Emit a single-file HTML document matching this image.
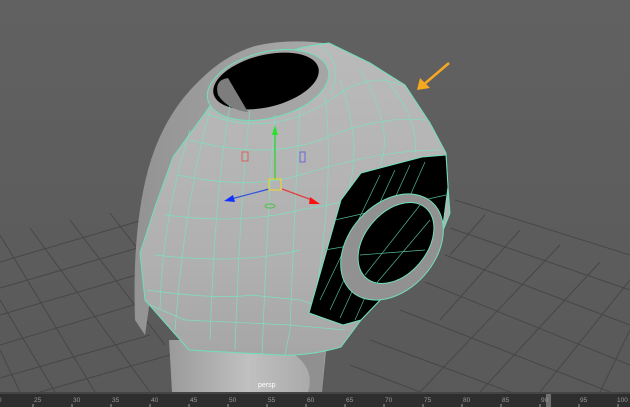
<!DOCTYPE html>
<html><head><style>
html,body{margin:0;padding:0;background:#5d5d5d;}
svg{display:block}
</style></head><body>
<svg width="630" height="407" viewBox="0 0 630 407" xmlns="http://www.w3.org/2000/svg" font-family="Liberation Sans, sans-serif">
<defs>
<linearGradient id="bg" x1="0" y1="0" x2="0" y2="1">
<stop offset="0" stop-color="#616161"/><stop offset="1" stop-color="#595959"/>
</linearGradient>
<linearGradient id="neck" x1="0" y1="0" x2="1" y2="0">
<stop offset="0" stop-color="#9a9a9a"/><stop offset="0.5" stop-color="#c0c0c0"/><stop offset="1" stop-color="#a4a4a4"/>
</linearGradient>
<linearGradient id="shell" x1="0" y1="0" x2="1" y2="0">
<stop offset="0" stop-color="#939393"/><stop offset="1" stop-color="#aaaaaa"/>
</linearGradient>
<linearGradient id="mesh" x1="0" y1="0" x2="0" y2="1">
<stop offset="0" stop-color="#bababa"/><stop offset="0.7" stop-color="#b0b0b0"/><stop offset="1" stop-color="#a6a6a6"/>
</linearGradient>
</defs>
<rect width="630" height="407" fill="url(#bg)"/>
<!-- floor grid -->
<g stroke="#474747" stroke-width="1" fill="none">
<line x1="0" y1="262" x2="170" y2="212"/>
<line x1="0" y1="288" x2="165" y2="240"/>
<line x1="0" y1="315" x2="160" y2="268"/>
<line x1="0" y1="345" x2="150" y2="300"/>
<line x1="0" y1="378" x2="150" y2="335"/>
<line x1="40" y1="392" x2="170" y2="355"/>
<line x1="0" y1="235" x2="95" y2="392"/>
<line x1="30" y1="228" x2="150" y2="392"/>
<line x1="70" y1="220" x2="165" y2="345"/>
<line x1="110" y1="213" x2="150" y2="265"/>
<line x1="0" y1="300" x2="55" y2="392"/>
<line x1="0" y1="350" x2="20" y2="392"/>
<line x1="455" y1="200" x2="630" y2="255"/>
<line x1="450" y1="228" x2="630" y2="290"/>
<line x1="445" y1="255" x2="630" y2="325"/>
<line x1="425" y1="282" x2="630" y2="365"/>
<line x1="400" y1="310" x2="610" y2="392"/>
<line x1="370" y1="340" x2="510" y2="392"/>
<line x1="350" y1="365" x2="420" y2="392"/>
<line x1="630" y1="280" x2="540" y2="392"/>
<line x1="600" y1="262" x2="480" y2="392"/>
<line x1="560" y1="245" x2="420" y2="392"/>
<line x1="520" y1="230" x2="440" y2="320"/>
<line x1="485" y1="215" x2="450" y2="255"/>
<line x1="630" y1="330" x2="600" y2="392"/>
</g>
<!-- neck -->
<path d="M169 340 L327 340 L322 392 L172 392 Z" fill="url(#neck)"/>
<path d="M295 355 Q315 370 308 392 L322 392 L325 350 Z" fill="#909090"/>
<!-- back shell -->
<path d="M255 46 Q290 38 330 44 L320 70 L205 115 L175 160 L160 215 L150 300 L145 335 L135 320 Q132 230 148 170 Q163 115 200 80 Q225 55 255 46 Z" fill="url(#shell)"/>
<!-- main selected mesh -->
<path d="M205 113 Q230 75 270 58 Q300 46 329 43 L370 63 L405 85 L430 123 L446 153 L448 187 L450 213 L442 233 L402 277 L361 320 L341 347 Q310 356 281 355 L189 350 L145 300 L140 253 L155 207 L173 157 Z" fill="url(#mesh)" stroke="#6fe0b8" stroke-width="1"/>
<!-- top hole -->
<ellipse cx="268" cy="85" rx="62" ry="33" transform="rotate(-14 268 85)" fill="#a5a5a5" stroke="#6fe0b8" stroke-width="1"/>
<ellipse cx="266" cy="81" rx="54" ry="26" transform="rotate(-14 266 81)" fill="#000"/>
<path d="M218 95 Q214 80 228 78 Q238 95 248 112 Q228 110 218 95 Z" fill="#7d7d7d"/>
<!-- wireframe lines -->
<g stroke="#7ae4bf" stroke-width="0.7" fill="none" opacity="0.9">
<path d="M205 113 Q270 140 330 100 Q370 70 400 85"/>
<path d="M190 140 Q265 160 320 140 Q380 115 425 120"/>
<path d="M178 175 Q250 190 300 175 Q380 150 440 150"/>
<path d="M165 215 Q240 225 300 210 Q330 205 350 200"/>
<path d="M155 255 Q240 265 300 250"/>
<path d="M147 290 Q220 300 250 295 L300 300 L330 310"/>
<path d="M150 305 L185 320 L290 325 L345 330"/>
<path d="M230 105 Q215 190 210 340"/>
<path d="M250 110 Q240 200 235 350"/>
<path d="M275 115 Q268 200 262 355"/>
<path d="M300 108 Q295 200 290 330 L285 355"/>
<path d="M325 95 Q335 180 315 300"/>
<path d="M340 80 Q365 150 345 200"/>
<path d="M360 70 Q395 130 380 165"/>
<path d="M385 78 Q420 120 415 155"/>
<path d="M210 110 Q185 200 175 330"/>
<path d="M190 130 Q162 220 160 310"/>
<path d="M320 45 Q345 65 330 95"/>
</g>
<!-- side cavity -->
<path d="M309 313 L341 200 L361 173 L422 157 L446 155 L448 187 L442 233 L402 277 L361 320 L343 325 Z" fill="#000" stroke="#6fe0b8" stroke-width="1"/>
<g stroke="#4fb893" stroke-width="0.7" fill="none">
<path d="M320 300 L380 175"/><path d="M330 310 L395 170"/><path d="M340 318 L410 165"/>
<path d="M355 320 L425 162"/><path d="M325 250 L440 230"/><path d="M335 220 L446 195"/>
</g>
<!-- ring -->
<ellipse cx="392" cy="247" rx="60" ry="43" transform="rotate(-48 392 247)" fill="#919191" stroke="#6fe0b8" stroke-width="1"/>
<ellipse cx="396" cy="243" rx="46" ry="31" transform="rotate(-50 396 243)" fill="#000" stroke="#6fe0b8" stroke-width="1"/>
<g stroke="#4fb893" stroke-width="0.7" fill="none">
<path d="M365 275 L420 205"/><path d="M375 285 L430 220"/><path d="M360 255 L425 250"/>
</g>
<!-- manipulator -->
<rect x="242" y="152" width="6" height="9" fill="none" stroke="#e06060" stroke-width="1"/>
<rect x="300" y="152" width="5" height="10" fill="none" stroke="#6a6ad8" stroke-width="1"/>
<line x1="275" y1="180" x2="275" y2="132" stroke="#2ed02e" stroke-width="1.2"/>
<polygon points="275,125 272,135 278,135" fill="#2ee02e"/>
<line x1="269" y1="189" x2="231" y2="199" stroke="#3050e0" stroke-width="1.2"/>
<polygon points="224,201 233,195 235,202" fill="#1030ff"/>
<line x1="282" y1="189" x2="312" y2="200" stroke="#e04040" stroke-width="1.2"/>
<polygon points="320,204 310,197 309,204" fill="#ff1010"/>
<rect x="269" y="179" width="12" height="11" fill="none" stroke="#e8d040" stroke-width="1.2"/>
<ellipse cx="270" cy="206" rx="5" ry="2" fill="none" stroke="#50c050" stroke-width="1"/>
<!-- orange arrow -->
<line x1="449" y1="63" x2="422" y2="86" stroke="#f5a820" stroke-width="2.5"/>
<polygon points="417,90 420,78 430,88" fill="#f5a820"/>
<text x="258" y="387" font-size="7" fill="#ffffff">persp</text>
<!-- timeline -->
<rect x="0" y="392" width="630" height="15" fill="#2e2e2e"/>
<rect x="0" y="392" width="630" height="2" fill="#444"/>
<rect x="546" y="394" width="5" height="13" fill="#9a9a9a" opacity="0.6"/>
<g font-size="6.5" fill="#9a9a9a">
<text x="-2" y="402">0</text>
<text x="34" y="402">25</text><text x="73" y="402">30</text><text x="112" y="402">35</text>
<text x="151" y="402">40</text><text x="190" y="402">45</text><text x="229" y="402">50</text>
<text x="268" y="402">55</text><text x="307" y="402">60</text><text x="346" y="402">65</text>
<text x="385" y="402">70</text><text x="424" y="402">75</text><text x="463" y="402">80</text>
<text x="502" y="402">85</text><text x="541" y="402">90</text><text x="580" y="402">95</text>
<text x="617" y="402">100</text>
</g>
<g stroke="#9a9a9a" stroke-width="1">
<line x1="33" y1="404" x2="33" y2="407"/><line x1="72" y1="404" x2="72" y2="407"/>
<line x1="111" y1="404" x2="111" y2="407"/><line x1="150" y1="404" x2="150" y2="407"/>
<line x1="189" y1="404" x2="189" y2="407"/><line x1="228" y1="404" x2="228" y2="407"/>
<line x1="267" y1="404" x2="267" y2="407"/><line x1="306" y1="404" x2="306" y2="407"/>
<line x1="345" y1="404" x2="345" y2="407"/><line x1="384" y1="404" x2="384" y2="407"/>
<line x1="423" y1="404" x2="423" y2="407"/><line x1="462" y1="404" x2="462" y2="407"/>
<line x1="501" y1="404" x2="501" y2="407"/><line x1="540" y1="404" x2="540" y2="407"/>
<line x1="579" y1="404" x2="579" y2="407"/><line x1="618" y1="404" x2="618" y2="407"/>
</g>
</svg>
</body></html>
